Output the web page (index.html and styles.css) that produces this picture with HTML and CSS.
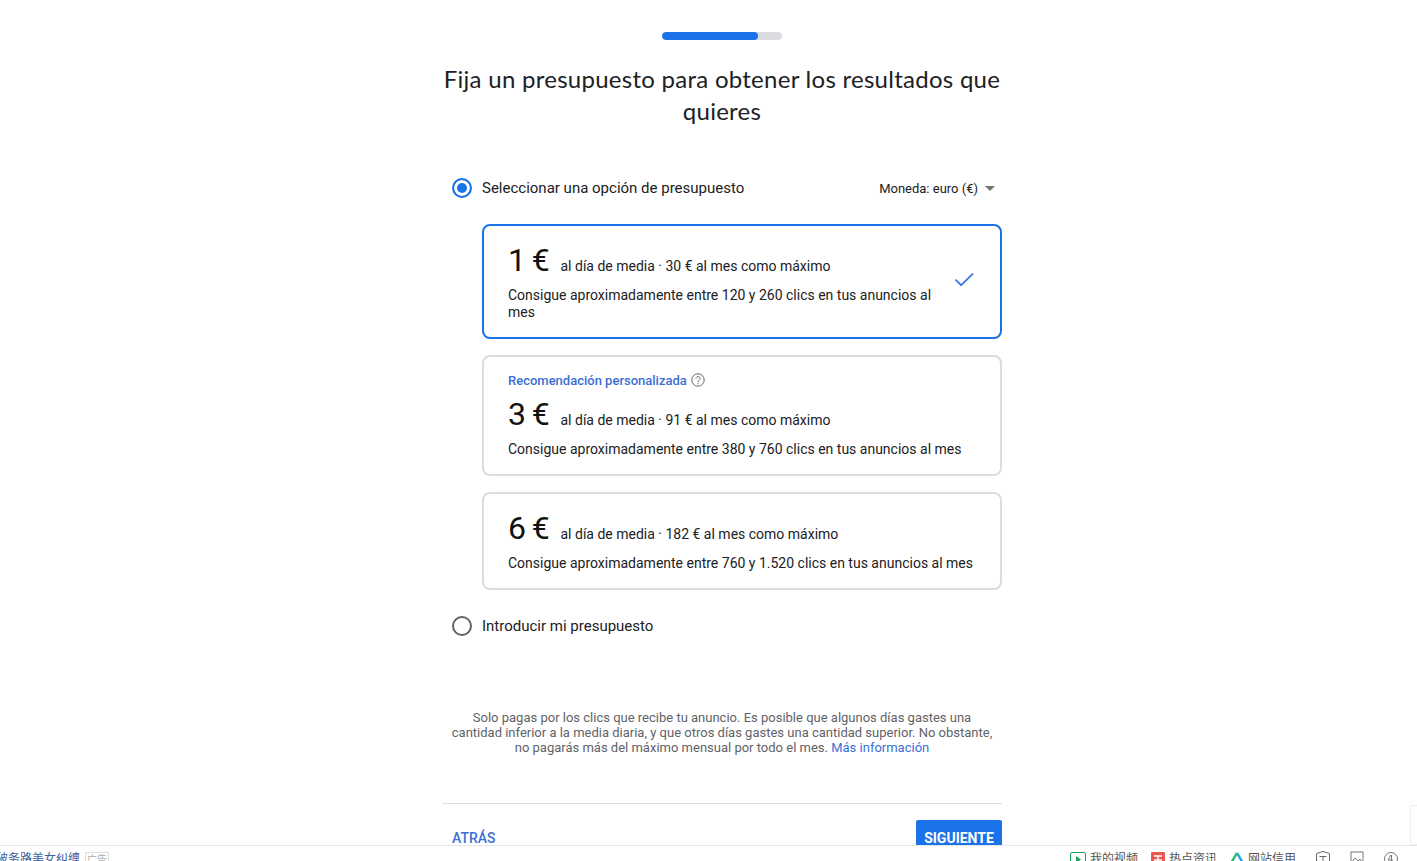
FILE: index.html
```html
<!DOCTYPE html>
<html lang="es">
<head>
<meta charset="utf-8">
<title>Presupuesto</title>
<link rel="stylesheet" href="styles.css">
</head>
<body>
<main class="page">
  <div class="column">
    <div class="progress"><div class="progress-fill"></div></div>
    <h1 class="title">Fija un presupuesto para obtener los resultados que quieres</h1>
    <div class="option-row">
      <span class="radio radio-on"></span>
      <span class="option-label">Seleccionar una opción de presupuesto</span>
      <span class="currency">Moneda: euro (€)<span class="caret"></span></span>
    </div>
    <div class="cards">
      <div class="card card-selected">
        <div class="card-body">
          <div class="price-line"><span class="price">1 €</span><span class="price-note">al día de media · 30 € al mes como máximo</span></div>
          <p class="clicks">Consigue aproximadamente entre 120 y 260 clics en tus anuncios al mes</p>
        </div>
        <svg class="check" width="24" height="24" viewBox="0 0 24 24"><path d="M3.500 12.600l5.600 5.600L21 6.600" fill="none" stroke="#3b78e7" stroke-width="1.800"/></svg>
      </div>
      <div class="card card-rec">
        <div class="card-body">
          <div class="rec">Recomendación personalizada
            <svg class="help" width="14" height="14" viewBox="0 0 14 14"><circle cx="7" cy="7" r="6.200" fill="none" stroke="#666" stroke-width="1"/><path d="M5 5.600a2 2 0 1 1 3.200 1.600c-.8.6-1.200.9-1.200 1.800" fill="none" stroke="#666" stroke-width="1"/><circle cx="7" cy="10.600" r=".7" fill="#666"/></svg>
          </div>
          <div class="price-line"><span class="price">3 €</span><span class="price-note">al día de media · 91 € al mes como máximo</span></div>
          <p class="clicks">Consigue aproximadamente entre 380 y 760 clics en tus anuncios al mes</p>
        </div>
      </div>
      <div class="card">
        <div class="card-body">
          <div class="price-line"><span class="price">6 €</span><span class="price-note">al día de media · 182 € al mes como máximo</span></div>
          <p class="clicks">Consigue aproximadamente entre 760 y 1.520 clics en tus anuncios al mes</p>
        </div>
      </div>
    </div>
    <div class="option-row option-row-second">
      <span class="radio"></span>
      <span class="option-label">Introducir mi presupuesto</span>
    </div>
    <p class="note">Solo pagas por los clics que recibe tu anuncio. Es posible que algunos días gastes una cantidad inferior a la media diaria, y que otros días gastes una cantidad superior. No obstante, no pagarás más del máximo mensual por todo el mes. <a class="link" href="#">Más información</a></p>
    <div class="actions">
      <a class="back" href="#">ATRÁS</a>
      <button class="next" type="button">SIGUIENTE</button>
    </div>
  </div>
</main>
<div class="edge-tab"></div>
<footer class="statusbar">
  <div class="status-left">
    <span class="ad-text">破务路美女纠缠</span>
    <span class="ad-tag">广告</span>
  </div>
  <div class="status-right">
    <span class="status-item"><svg width="16" height="16" viewBox="0 0 16 16"><rect x=".5" y="1.500" width="15" height="14" rx="1.500" fill="none" stroke="#1aa260"/><path d="M6 5l5 3.500L6 12z" fill="#1aa260"/></svg>我的视频</span>
    <span class="status-item"><svg width="14" height="16" viewBox="0 0 14 16"><rect y="1" width="14" height="15" rx="1" fill="#e8584d"/><path d="M3 5h8M3 9h8M7 5v7" stroke="#fff" stroke-width="1.300"/></svg>热点资讯</span>
    <span class="status-item status-item-last"><svg width="14" height="16" viewBox="0 0 14 16"><path d="M7 2l6 10" stroke="#2b9cf2" stroke-width="2.400" fill="none"/><path d="M7 2L1 12" stroke="#1fc16b" stroke-width="2.400" fill="none"/></svg>网站信用</span>
    <svg class="status-icon" width="16" height="16" viewBox="0 0 16 16"><path d="M8 .5l6.500 2v8L8 16 1.500 10.500v-8z" fill="none" stroke="#666"/><path d="M4.500 5.500h7M8 5.500v6" stroke="#666"/></svg>
    <svg class="status-icon" width="16" height="16" viewBox="0 0 16 16"><rect x="2" y="1" width="12" height="14" fill="none" stroke="#777"/><path d="M3 11l3-4 3 3 2-2 2 3" fill="none" stroke="#777"/></svg>
    <svg class="status-icon" width="16" height="16" viewBox="0 0 16 16"><circle cx="8" cy="8" r="6.500" fill="none" stroke="#777"/><path d="M8 4l-3 5h5M8.500 4v7" fill="none" stroke="#777"/></svg>
  </div>
</footer>
</body>
</html>
```
FILE: styles.css
```css
* { box-sizing: border-box; }
html, body { margin: 0; height: 100%; overflow: hidden; background: #fff; }
body {
  display: flex;
  flex-direction: column;
  font-family: Roboto, "Liberation Sans", sans-serif;
  color: #202124;
  position: relative;
}
.page { flex: 1; min-height: 0; overflow: hidden; padding-left: 442px; }
.column { width: 560px; padding-top: 32px; }
.progress { width: 120px; height: 8px; margin: 0 auto; border-radius: 4px; background: #dadce0; overflow: hidden; }
.progress-fill { width: 96px; height: 100%; border-radius: 4px; background: #1a73e8; }
.title {
  margin: 23px 0 0;
  font-family: Lato, Roboto, sans-serif;
  font-weight: 400;
  font-size: 24px;
  line-height: 32px;
  letter-spacing: .27px;
  text-align: center;
  color: #202124;
}
.option-row { display: flex; align-items: center; height: 20px; margin-top: 51px; padding-left: 10px; }
.option-row-second { margin-top: 26px; }
.radio { width: 20px; height: 20px; border: 2px solid #5f6368; border-radius: 50%; flex: none; }
.radio-on { border-color: #1a73e8; background: #1a73e8; box-shadow: inset 0 0 0 3px #fff; }
.option-label { margin-left: 10px; font-size: 15px; color: #202124; }
.currency { display: flex; align-items: center; margin-left: auto; padding-right: 7px; font-size: 13px; color: #202124; }
.caret { width: 0; height: 0; margin-left: 7px; border: 5px solid transparent; border-top-color: #757575; border-bottom: 0; }
.cards { display: flex; flex-direction: column; gap: 16px; margin: 26px 0 0 40px; }
.card { display: flex; align-items: center; border: 2px solid #dadce0; border-radius: 8px; padding: 17px 24px 16px 24px; }
.card-selected { border-color: #1a73e8; }
.card-body { flex: 1; min-width: 0; }
.card-rec { padding-top: 14px; }
.rec { display: flex; align-items: center; gap: 4px; height: 18px; margin-bottom: 8px; font-size: 13px; font-weight: 500; color: #3b6fd4; }
.help { flex: none; }
.price-line { display: flex; align-items: baseline; height: 34px; }
.price { font-size: 32px; line-height: 34px; color: #111; width: 52.500px; flex: none; letter-spacing: -.8px; word-spacing: -.5px; }
.price-note { font-size: 14px; color: #202124; }
.clicks { margin: 10px 0 0; font-size: 14px; line-height: 17px; color: #202124; }
.check { flex: none; margin: 0 0 6px 2px; }
.note { margin: 74px 0 0; font-size: 13px; line-height: 15px; text-align: center; color: #5f6368; padding: 0 8px; }
.link, .back { color: #3b6fd4; text-decoration: none; }
.actions { display: flex; align-items: flex-start; justify-content: space-between; margin-top: 48px; border-top: 1px solid #dadce0; padding-top: 16px; }
.back { padding: 10px 10px; font-size: 14px; font-weight: 500; line-height: 16px; }
.next { height: 36px; width: 86px; padding: 0; border: 0; border-radius: 2px; background: #1a73e8; color: #fff; font: 700 14px/16px Roboto, sans-serif; }
.edge-tab { position: absolute; right: 0; bottom: 16px; width: 7px; height: 40px; border: 1px solid #eee; border-right: 0; background: #fff; }
.statusbar { height: 16px; flex: none; display: flex; justify-content: space-between; overflow: hidden; border-top: 1px solid #e6e6e6; background: #fff; font-family: "Noto Sans CJK SC", sans-serif; font-size: 12px; line-height: 23px; }
.status-left { display: flex; align-items: flex-start; margin-left: -4px; }
.ad-text { color: #3a5f9e; }
.ad-tag { margin: 6px 0 0 5px; padding: 0 1px; border: 1px solid #ddd; font-size: 10px; line-height: 12px; color: #aaa; }
.status-right { display: flex; align-items: flex-start; padding: 5px 18px 0 0; gap: 13px; }
.status-item { display: flex; align-items: flex-start; gap: 4px; color: #555; margin-top: -5px; line-height: 23px; }
.status-item-last { margin-right: 1px; }
.status-item svg { margin-top: 5px; }
.status-icon { margin-left: 5px; }
```
